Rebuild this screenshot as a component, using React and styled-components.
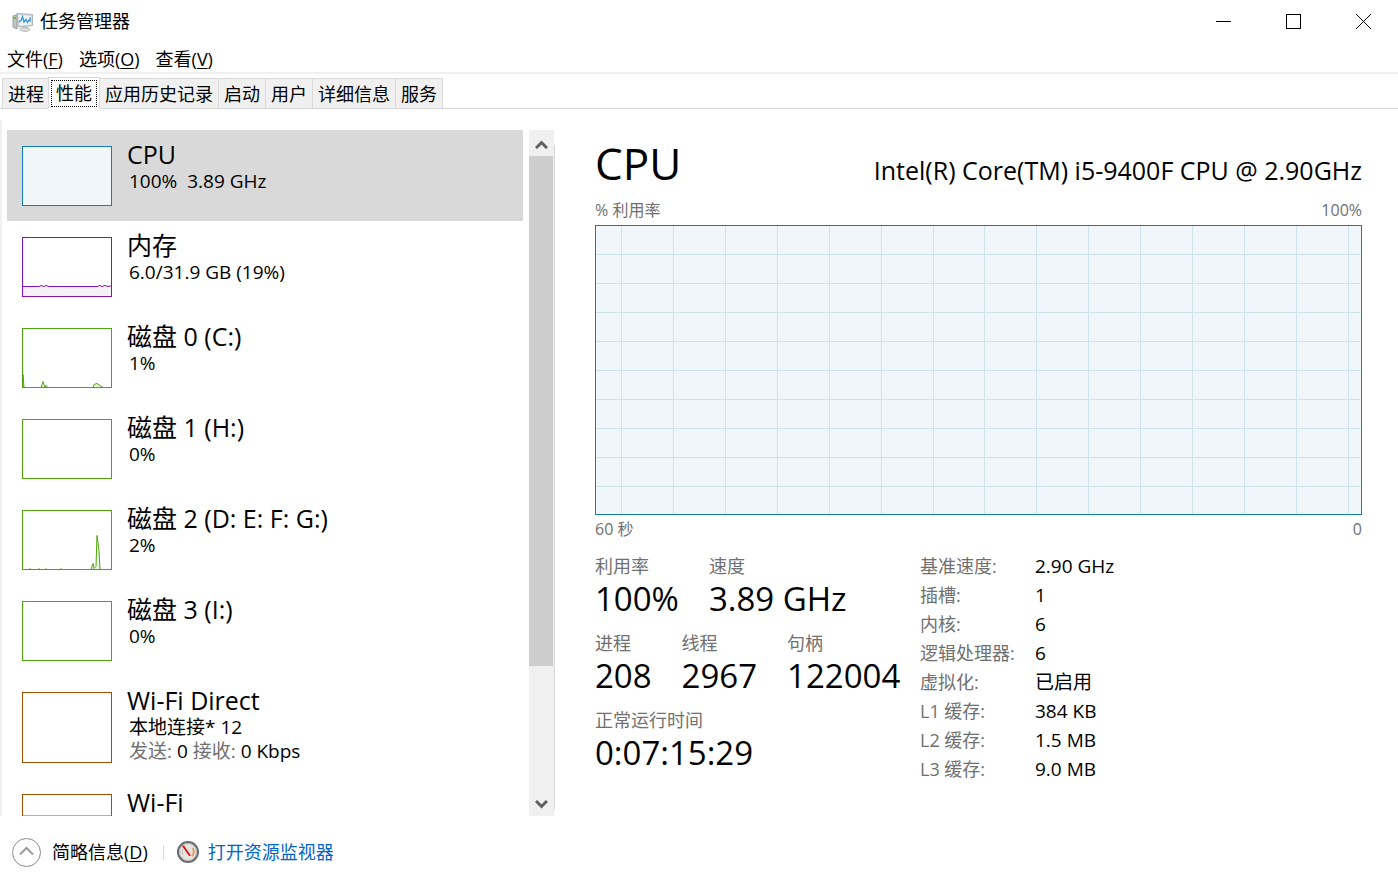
import React from 'react';
import styled, { createGlobalStyle } from 'styled-components';

const font = '"Open Sans", "Noto Sans CJK SC", sans-serif';

const resources = [
  { name: 'CPU', lines: ['100%  3.89 GHz'], color: '#117dbb', fill: '#f1f6fa', selected: true },
  {
    name: '内存',
    lines: ['6.0/31.9 GB (19%)'],
    color: '#8b12ae',
    area: 'M0 49H17L19 48L22 49L24 48L27 49H75L78 48L80 49L83 48L86 49L90 48V60H0Z',
    areaFill: '#f4f2f4',
  },
  {
    name: '磁盘 0 (C:)',
    lines: ['1%'],
    color: '#4da60c',
    area: 'M1 59V46L2 59H19L21 53L23 59L24 57L26 59H71L72 56L75 55L78 57L81 59Z',
    areaFill: '#eff7e9',
  },
  { name: '磁盘 1 (H:)', lines: ['0%'], color: '#4da60c' },
  {
    name: '磁盘 2 (D: E: F: G:)',
    lines: ['2%'],
    color: '#4da60c',
    area: 'M7 59L8 58L9 59H16L17 58L18 59H23L24 58L25 59H38L39 58L40 59H69L71 53L72 58L74 56L75 25L77 40L78 59Z',
    areaFill: '#eff7e9',
  },
  { name: '磁盘 3 (I:)', lines: ['0%'], color: '#4da60c' },
  {
    name: 'Wi-Fi Direct',
    lines: ['本地连接* 12'],
    traffic: { sent: '0', received: '0 Kbps' },
    color: '#a74f01',
    tall: true,
  },
  {
    name: 'Wi-Fi',
    lines: [],
    color: '#a74f01',
    area: 'M1 21H89',
    areaOpacity: 0.5,
    tall: true,
  },
];

const tabs = ['进程', '性能', '应用历史记录', '启动', '用户', '详细信息', '服务'];

const menus = [
  { label: '文件', accessKey: 'F' },
  { label: '选项', accessKey: 'O' },
  { label: '查看', accessKey: 'V' },
];

const stats = [
  [{ label: '利用率', value: '100%' }, { label: '速度', value: '3.89 GHz' }],
  [{ label: '进程', value: '208' }, { label: '线程', value: '2967' }, { label: '句柄', value: '122004' }],
  [{ label: '正常运行时间', value: '0:07:15:29' }],
];

const specs = [
  ['基准速度:', '2.90 GHz'],
  ['插槽:', '1'],
  ['内核:', '6'],
  ['逻辑处理器:', '6'],
  ['虚拟化:', '已启用'],
  ['L1 缓存:', '384 KB'],
  ['L2 缓存:', '1.5 MB'],
  ['L3 缓存:', '9.0 MB'],
];

const columns = [26, 78, 130, 182, 234, 286, 338, 389, 441, 493, 545, 597, 649, 701, 753];
const rows = [29, 58, 87, 116, 145, 174, 203, 232, 261];

const AppIcon = () => (
  <svg width="22" height="20" viewBox="0 0 22 20" aria-hidden="true">
    <path d="M1 4L5 2.5V17L1 15Z" fill="#c3c6c8" stroke="#9a9d9f" />
    <path d="M1.5 6H4" stroke="#5fb83a" strokeWidth="2" />
    <path d="M5 1.5L20.500 2.500V13.500L6 15Z" fill="#d5d8da" stroke="#b0b3b5" />
    <path d="M6.500 3L19 4V12.500L7.500 13.500Z" fill="#eef6fb" />
    <path d="M7 10L9 8.500L10.500 4.500L12 10L14 7.500L15.500 10.500L18 6.500V10" fill="none" stroke="#3a96d0" strokeWidth="1.300" />
    <path d="M11 14.500H16V17H11Z" fill="#c3c6c8" />
    <ellipse cx="13" cy="17.500" rx="5" ry="1.800" fill="#dfe1e2" stroke="#b0b3b5" />
  </svg>
);

const GaugeIcon = () => (
  <svg width="24" height="24" viewBox="0 0 24 24" aria-hidden="true">
    <circle cx="12" cy="12" r="10" fill="#e8e4df" stroke="#666c70" strokeWidth="2" />
    <circle cx="12" cy="12" r="8.500" fill="none" stroke="#b4b6b7" />
    <path d="M7 15A6 6 0 0 1 7 9" fill="none" stroke="#c4c0ba" />
    <path d="M16.500 8A6 6 0 0 1 16 16" fill="none" stroke="#e39a64" strokeWidth="2" />
    <path d="M6 6L8 5.500L15 15.500L13 16Z" fill="#cf1d24" />
  </svg>
);

const Chevron = ({ down }) => (
  <svg width="13" height="9" viewBox="0 0 13 9" aria-hidden="true">
    <path d={down ? 'M1 1L6.5 6.5L12 1' : 'M1 8L6.5 2.5L12 8'} fill="none" stroke="#606060" strokeWidth="3" />
  </svg>
);

const Thumbnail = ({ item }) => {
  const height = item.tall ? 71 : 60;
  return (
    <ThumbStyle width="90" height={height} viewBox={`0 0 90 ${height}`} aria-hidden="true">
      <rect width="90" height={height} fill={item.fill || '#fff'} />
      {item.area && (
        <path
          d={item.area}
          fill={item.areaFill || 'none'}
          stroke={item.color}
          strokeOpacity={item.areaOpacity}
          transform="translate(0 .5)"
        />
      )}
      <rect x=".5" y=".5" width="89" height={height - 1} fill="none" stroke={item.color} />
    </ThumbStyle>
  );
};

const Resource = ({ item }) => (
  <ResourceRow type="button" $selected={item.selected}>
    <Thumbnail item={item} />
    <ResourceText>
      <ResourceName>{item.name}</ResourceName>
      {item.lines.map(line => <ResourceLine key={line}>{line}</ResourceLine>)}
      {item.traffic && (
        <ResourceLine>
          <Muted>发送:</Muted>
          {` ${item.traffic.sent} `}
          <Muted>接收:</Muted>
          {` ${item.traffic.received}`}
        </ResourceLine>
      )}
    </ResourceText>
  </ResourceRow>
);

const UsageChart = () => (
  <ChartStyle viewBox="0 0 767 290" preserveAspectRatio="none" role="img" aria-label="CPU % 利用率">
    <rect width="767" height="290" fill="#f1f6fa" />
    {columns.map(x => <line key={x} x1={x + 0.5} x2={x + 0.5} y1="0" y2="290" stroke="#cfe3ef" />)}
    {rows.map(y => <line key={y} x1="0" x2="765" y1={y + 0.5} y2={y + 0.5} stroke="#cfe3ef" />)}
    <rect x=".5" y=".5" width="766" height="289" fill="none" stroke="#117dbb" />
  </ChartStyle>
);

function App() {
  return (
    <Window>
      <GlobalStyle />
      <TitleBar>
        <AppIcon />
        <Title>任务管理器</Title>
        <WindowButton type="button" aria-label="最小化">
          <svg width="15" height="15"><path d="M0 7.5H15" stroke="#000" /></svg>
        </WindowButton>
        <WindowButton type="button" aria-label="最大化">
          <svg width="15" height="15"><rect x=".5" y=".5" width="14" height="14" fill="none" stroke="#000" /></svg>
        </WindowButton>
        <WindowButton type="button" aria-label="关闭">
          <svg width="15" height="15"><path d="M0 0L15 15M15 0L0 15" stroke="#000" /></svg>
        </WindowButton>
      </TitleBar>
      <MenuBar>
        {menus.map(({ label, accessKey }) => (
          <MenuButton key={accessKey} type="button">
            {label}
            (
            <u>{accessKey}</u>
            )
          </MenuButton>
        ))}
      </MenuBar>
      <TabBar role="tablist">
        {tabs.map(tab => (
          <Tab key={tab} type="button" role="tab" aria-selected={tab === '性能'} $active={tab === '性能'}>
            <span>{tab}</span>
          </Tab>
        ))}
      </TabBar>
      <Content>
        <Sidebar>
          <ResourceList>
            {resources.map(item => <Resource key={item.name} item={item} />)}
          </ResourceList>
          <ScrollBar>
            <ScrollButton type="button" aria-label="向上滚动"><Chevron /></ScrollButton>
            <ScrollTrack><ScrollThumb /></ScrollTrack>
            <ScrollButton type="button" aria-label="向下滚动"><Chevron down /></ScrollButton>
          </ScrollBar>
          <Splitter />
        </Sidebar>
        <Details>
          <DetailsHeader>
            <h1>CPU</h1>
            <h2>Intel(R) Core(TM) i5-9400F CPU @ 2.90GHz</h2>
          </DetailsHeader>
          <ChartCaption>
            <span>% 利用率</span>
            <span>100%</span>
          </ChartCaption>
          <UsageChart />
          <ChartCaption>
            <span>60 秒</span>
            <span>0</span>
          </ChartCaption>
          <Summary>
            <Stats>
              {stats.map(group => (
                <StatRow key={group[0].label}>
                  {group.map(({ label, value }) => (
                    <div key={label}>
                      <StatLabel>{label}</StatLabel>
                      <StatValue>{value}</StatValue>
                    </div>
                  ))}
                </StatRow>
              ))}
            </Stats>
            <Specs>
              {specs.map(([label, value]) => (
                <React.Fragment key={label}>
                  <dt>{label}</dt>
                  <dd>{value}</dd>
                </React.Fragment>
              ))}
            </Specs>
          </Summary>
        </Details>
      </Content>
      <Footer>
        <FewerButton type="button">
          <svg width="29" height="29" viewBox="0 0 29 29" aria-hidden="true">
            <circle cx="14.5" cy="14.5" r="14" fill="none" stroke="#8a8a8a" />
            <path d="M8 16.5L14.5 10L21 16.5" fill="none" stroke="#9a9a9a" strokeWidth="2" />
          </svg>
          <FooterText>
            简略信息(
            <u>D</u>
            )
          </FooterText>
        </FewerButton>
        <FooterDivider />
        <MonitorLink href="#resmon">
          <GaugeIcon />
          <FooterText>打开资源监视器</FooterText>
        </MonitorLink>
      </Footer>
    </Window>
  );
}

export default App;


const GlobalStyle = createGlobalStyle`
  * {
    box-sizing: border-box;
  }
  body {
    margin: 0;
    background: #fff;
    color: #000;
    font-family: ${font};
    font-size: 18px;
  }
  button {
    background: none;
    border: 0;
    color: inherit;
    font: inherit;
    padding: 0;
  }
  svg {
    display: block;
    flex-shrink: 0;
  }
  u {
    text-decoration-thickness: 1px;
    text-underline-offset: 2px;
  }
`;

const Window = styled.div`
  display: flex;
  flex-direction: column;
  height: 100vh;
`;

const TitleBar = styled.header`
  display: flex;
  align-items: center;
  height: 43px;
  padding-left: 12px;
`;

const Title = styled.div`
  flex: 1;
  padding: 0 0 3px 6px;
`;

const WindowButton = styled.button`
  display: flex;
  align-items: center;
  justify-content: center;
  width: 70px;
  height: 43px;
`;

const MenuBar = styled.nav`
  display: flex;
  gap: 16px;
  height: 31px;
  padding-left: 7px;
  border-bottom: 2px solid #f0f0f0;
`;

const MenuButton = styled.button`
  padding-top: 2px;
  line-height: 28px;
`;

const TabBar = styled.div`
  display: flex;
  align-items: flex-end;
  height: 35px;
  padding-left: 2px;
  border-bottom: 1px solid #d9d9d9;
`;

const Tab = styled.button`
  height: ${props => (props.$active ? '32px' : '30px')};
  margin-bottom: ${props => (props.$active ? '-1px' : '0')};
  padding: ${props => (props.$active ? '2px' : '2px 5px 0')};
  background: ${props => (props.$active ? '#fff' : '#f0f0f0')};
  border: 1px solid #d9d9d9;
  border-width: ${props => (props.$active ? '1px 1px 0' : '1px 1px 0 0')};
  span {
    display: block;
    padding: ${props => (props.$active ? '0 4px' : '0')};
    border: ${props => (props.$active ? '1px dotted #000' : '0')};
    line-height: ${props => (props.$active ? '25px' : '27px')};
  }
  &:first-child {
    border-width: 1px 0 0 1px;
    padding-right: 4px;
  }
`;

const Content = styled.main`
  display: flex;
  flex: 1;
  min-height: 0;
  padding-top: 21px;
`;

const Sidebar = styled.aside`
  display: flex;
  flex: 0 0 555px;
  min-height: 0;
  margin-top: -10px;
  padding-top: 10px;
  border-left: 2px solid #f0f0f0;
`;

const ResourceList = styled.div`
  flex: 1;
  overflow: hidden;
  margin: 0 6px 0 5px;
`;

const ResourceRow = styled.button`
  display: flex;
  align-items: flex-start;
  width: 100%;
  padding: 10px 15px 15px;
  background: ${props => (props.$selected ? '#d9d9d9' : 'transparent')};
  text-align: left;
`;

const ThumbStyle = styled.svg`
  margin-top: 6px;
`;

const ResourceText = styled.div`
  padding-left: 15px;
`;

const ResourceName = styled.div`
  padding-bottom: 1px;
  font-size: 25px;
  line-height: 28px;
`;

const ResourceLine = styled.div`
  padding-left: 2px;
  font-size: 19px;
  line-height: 24px;
  white-space: pre;
`;

const Muted = styled.span`
  color: #707070;
`;

const ScrollBar = styled.div`
  display: flex;
  flex-direction: column;
  width: 25px;
  background: #f0f0f0;
`;

const ScrollButton = styled.button`
  display: flex;
  align-items: center;
  justify-content: center;
  height: 26px;
  padding-top: 2px;
`;

const ScrollTrack = styled.div`
  flex: 1;
`;

const ScrollThumb = styled.div`
  width: 24px;
  height: 80.5%;
  background: #cdcdcd;
`;

const Splitter = styled.div`
  width: 1px;
  margin: 15px 0 6px;
  background: #d9d9d9;
`;

const Details = styled.section`
  flex: 1;
  min-width: 0;
  padding: 1px 36px 0 40px;
`;

const DetailsHeader = styled.div`
  display: flex;
  align-items: baseline;
  justify-content: space-between;
  height: 66px;
  h1, h2 {
    margin: 0;
    font-weight: 400;
    line-height: 64px;
    white-space: nowrap;
  }
  h1 {
    font-size: 44px;
  }
  h2 {
    font-size: 25px;
  }
`;

const ChartCaption = styled.div`
  display: flex;
  justify-content: space-between;
  color: #707070;
  font-size: 16px;
  line-height: 27px;
`;

const ChartStyle = styled.svg`
  width: 100%;
  height: 290px;
  margin: 1px 0;
  shape-rendering: crispEdges;
`;

const Summary = styled.div`
  display: grid;
  grid-template-columns: 325px 1fr;
  padding-top: 9px;
`;

const Stats = styled.div`
  display: flex;
  flex-direction: column;
`;

const StatRow = styled.div`
  display: flex;
  gap: 30px;
  height: 77px;
`;

const StatLabel = styled.div`
  color: #707070;
  line-height: 29px;
`;

const StatValue = styled.div`
  font-size: 33px;
  line-height: 36px;
`;

const Specs = styled.dl`
  display: grid;
  grid-template-columns: 115px 1fr;
  align-content: start;
  margin: 0;
  line-height: 29px;
  dt {
    color: #707070;
  }
  dd {
    margin: 0;
    font-size: 19px;
  }
`;

const Footer = styled.footer`
  display: flex;
  align-items: center;
  height: 72px;
  padding-left: 12px;
`;

const FewerButton = styled.button`
  display: flex;
  align-items: center;
  gap: 11px;
`;

const FooterText = styled.span`
  padding-bottom: 2px;
`;

const FooterDivider = styled.div`
  width: 1px;
  height: 15px;
  margin: 0 12px 0 15px;
  background: #d9d9d9;
`;

const MonitorLink = styled.a`
  display: flex;
  align-items: center;
  gap: 8px;
  color: #0066cc;
  text-decoration: none;
`;
